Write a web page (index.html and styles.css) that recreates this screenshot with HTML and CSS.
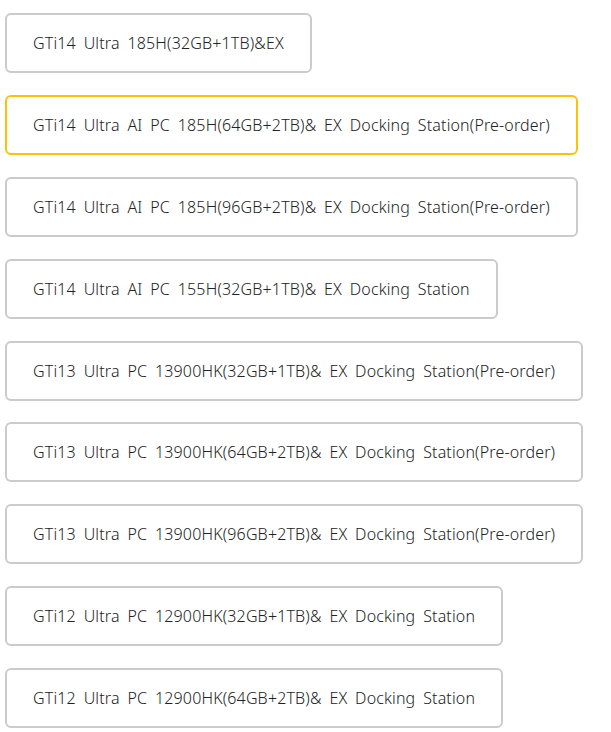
FILE: index.html
```
<!DOCTYPE html>
<html>
<head>
<meta charset="utf-8">
<link rel="stylesheet" href="styles.css">
</head>
<body>
<div class="options">
  <div class="option">GTi14 Ultra 185H(32GB+1TB)&amp;EX</div>
  <div class="option selected">GTi14 Ultra AI PC 185H(64GB+2TB)&amp; EX Docking Station(Pre-order)</div>
  <div class="option">GTi14 Ultra AI PC 185H(96GB+2TB)&amp; EX Docking Station(Pre-order)</div>
  <div class="option">GTi14 Ultra AI PC 155H(32GB+1TB)&amp; EX Docking Station</div>
  <div class="option">GTi13 Ultra PC 13900HK(32GB+1TB)&amp; EX Docking Station(Pre-order)</div>
  <div class="option">GTi13 Ultra PC 13900HK(64GB+2TB)&amp; EX Docking Station(Pre-order)</div>
  <div class="option">GTi13 Ultra PC 13900HK(96GB+2TB)&amp; EX Docking Station(Pre-order)</div>
  <div class="option">GTi12 Ultra PC 12900HK(32GB+1TB)&amp; EX Docking Station</div>
  <div class="option">GTi12 Ultra PC 12900HK(64GB+2TB)&amp; EX Docking Station</div>
</div>
</body>
</html>
```
FILE: styles.css
```
html, body {
  margin: 0;
  padding: 0;
  background: #fff;
}
body {
  font-family: "Noto Sans", "Liberation Sans", sans-serif;
  color: #222;
}
.options {
  display: flex;
  flex-direction: column;
  align-items: flex-start;
  gap: 21.875px;
  padding: 13px 0 0 5px;
}
.option {
  box-sizing: border-box;
  height: 60px;
  display: flex;
  align-items: center;
  padding: 0 26px;
  border: 2px solid #cbcbcb;
  border-radius: 6px;
  font-size: 16px;
  font-weight: 300;
  letter-spacing: 0.15px;
  word-spacing: 3.5px;
  white-space: nowrap;
}
.option.selected {
  border-color: #ffc107;
}
```
